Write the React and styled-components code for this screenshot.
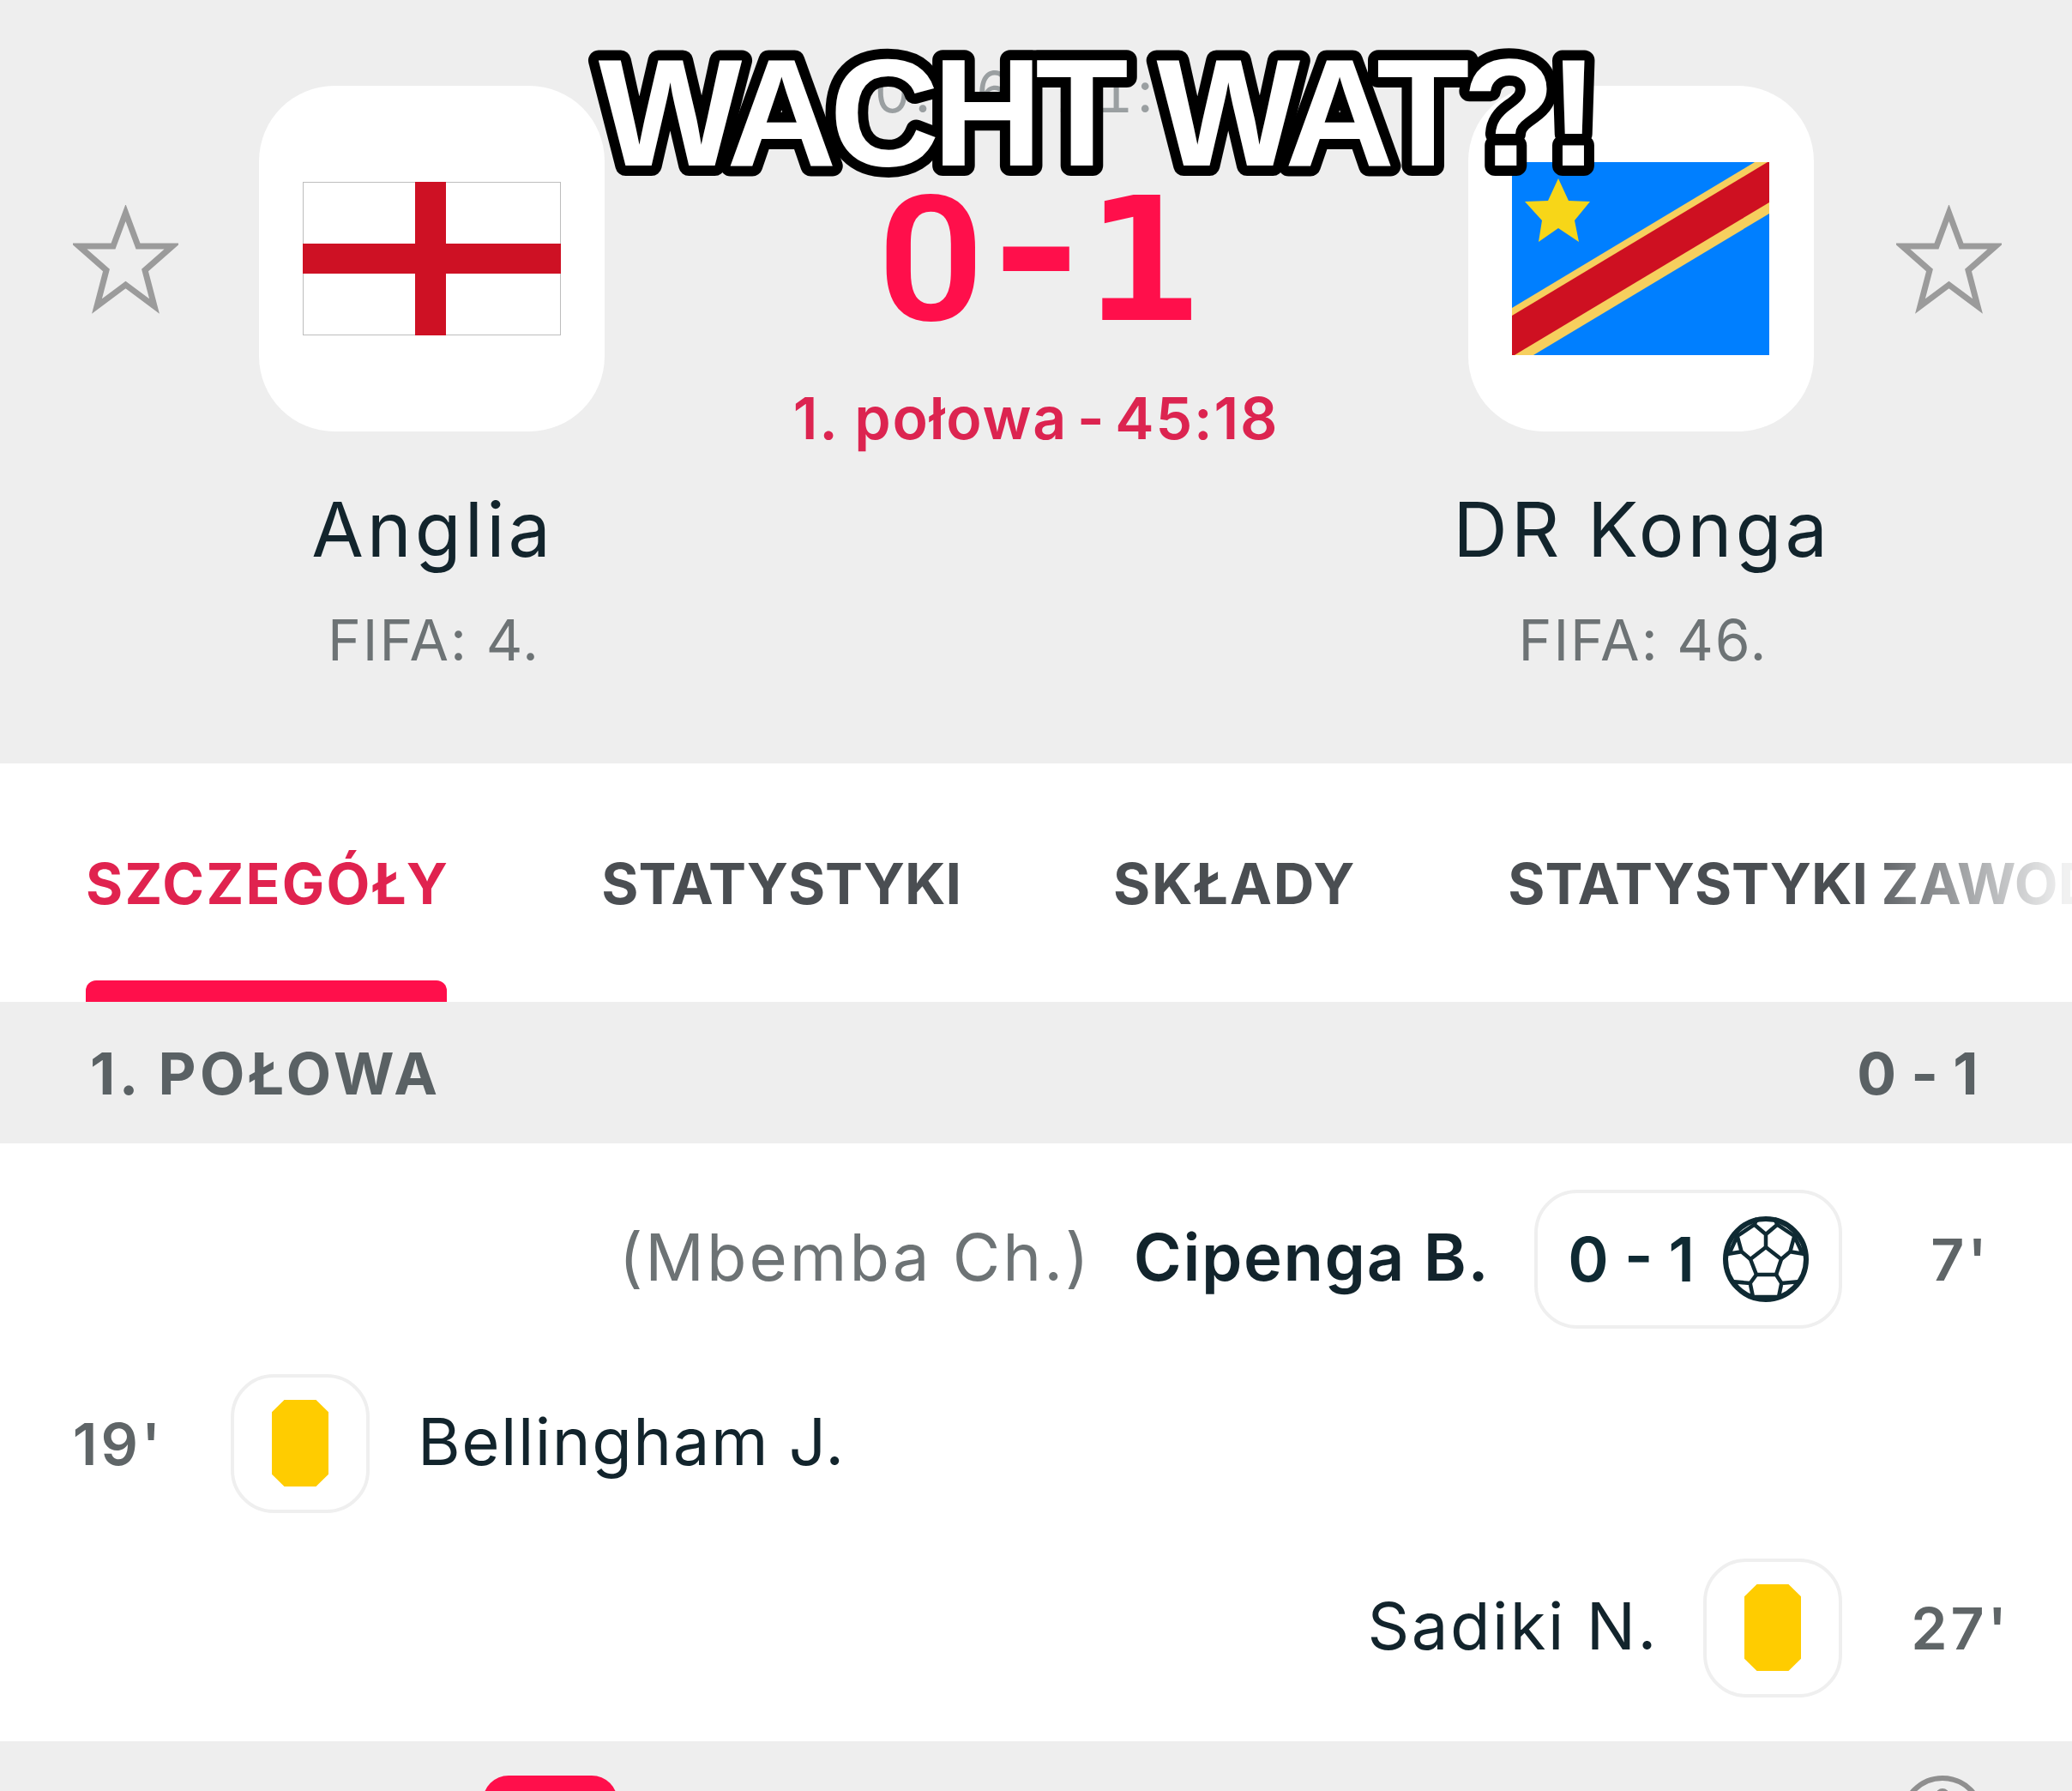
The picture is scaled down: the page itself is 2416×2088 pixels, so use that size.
import React from "react";
import styled, { createGlobalStyle } from "styled-components";

const GlobalStyle = createGlobalStyle`
  html, body { margin: 0; padding: 0; background: #fff; }
  body { font-family: Inter, "Liberation Sans", sans-serif; }
`;

const Page = styled.div`
  position: relative;
  width: 2416px;
  height: 2088px;
  overflow: hidden;
  background: #fff;
`;

const Caption = styled.svg`
  position: absolute;
  left: 660px;
  top: 30px;
  width: 1234px;
  height: 200px;
`;

const CaptionText = styled.text`
  font-family: "Liberation Sans", Arial, sans-serif;
  font-weight: 700;
  font-size: 177.5px;
  letter-spacing: -8.2px;
  fill: #fff;
  stroke: #000;
  stroke-width: 24px;
  stroke-linejoin: round;
  paint-order: stroke fill;
`;

const Header = styled.header`
  display: grid;
  grid-template-columns: 123px 500px 1fr 500px 123px;
  column-gap: 45px;
  box-sizing: border-box;
  height: 890px;
  padding: 0 85px;
  background: #eeeeee;
`;

const StarWrap = styled.div`
  padding-top: 239px;
  margin-left: ${(p) => (p.$right ? "3px" : "0")};
`;

const TeamCol = styled.div`
  display: flex;
  flex-direction: column;
  align-items: center;
  padding-top: 100px;
`;

const LogoBox = styled.div`
  display: flex;
  align-items: center;
  justify-content: center;
  width: 403px;
  height: 403px;
  border-radius: 88px;
  background: #fff;
`;

const TeamName = styled.div`
  margin-top: 66px;
  padding-left: 3px;
  font-size: 88px;
  line-height: 96px;
  letter-spacing: 4px;
  color: #12242c;
`;

const Rank = styled.div`
  margin-top: 41px;
  padding-left: 6px;
  font-size: 66px;
  line-height: 80px;
  letter-spacing: 2px;
  color: #6d7375;
`;

const CenterCol = styled.div`
  display: flex;
  flex-direction: column;
  align-items: center;
  padding-top: 69px;
`;

const DateLine = styled.div`
  font-size: 66px;
  line-height: 76px;
  letter-spacing: 5px;
  font-variant-numeric: tabular-nums;
  color: #9a9fa1;
`;

const Score = styled.div`
  display: flex;
  align-items: baseline;
  margin-top: 49px;
  height: 220px;
  font-family: "DejaVu Sans Mono", monospace;
  font-weight: 700;
  font-size: 200px;
  line-height: 220px;
  color: #ff0f4b;
`;

const ScoreZero = styled.span`
  display: inline-block;
  font-family: Roboto, sans-serif;
  font-weight: 600;
  font-size: 204px;
  margin-right: 8px;
  transform: translateX(4px) scaleX(1.07);
`;

const ScoreDash = styled.span`
  display: inline-block;
  margin-right: 4px;
  transform: translateY(-14px) scaleX(1.25);
`;

const ScoreOne = styled.span`
  display: inline-block;
  transform: scaleX(1.12);
`;

const Status = styled.div`
  margin-top: 33px;
  font-size: 68px;
  line-height: 80px;
  letter-spacing: 1.8px;
  font-weight: 600;
  color: #dc2450;
`;

const StatusDash = styled.span`
  margin: 0 -8px;
`;

const Tabs = styled.nav`
  display: flex;
  gap: 177px;
  box-sizing: border-box;
  height: 278px;
  padding-left: 100px;
  overflow: hidden;
  background: #fff;
`;

const Tab = styled.div`
  position: relative;
  flex: none;
  padding-top: 100px;
  font-size: 66px;
  line-height: 80px;
  font-weight: 700;
  letter-spacing: ${(p) => p.$ls}px;
  white-space: nowrap;
  color: ${(p) => (p.$active ? "#e0234f" : "#4a4e52")};
  ${(p) =>
    p.$fade &&
    `-webkit-mask-image: linear-gradient(to right, #000 400px, rgba(0,0,0,.08) 650px);`}
  ${(p) =>
    p.$active &&
    `&::after {
      content: "";
      position: absolute;
      left: 0;
      right: 3px;
      bottom: 0;
      height: 25px;
      border-radius: 12px 12px 0 0;
      background: #ff0f4b;
    }`}
`;

const SectionBar = styled.div`
  display: flex;
  align-items: center;
  justify-content: space-between;
  box-sizing: border-box;
  height: 165px;
  padding: 0 109px 0 105px;
  font-size: 68px;
  font-weight: 700;
  color: #5a6164;
  background: #eeeeee;
`;

const SectionTitle = styled.span`
  letter-spacing: 4.5px;
`;

const SectionScore = styled.span`
  letter-spacing: 0.5px;
`;

const Events = styled.section`
  box-sizing: border-box;
  height: 697px;
  padding: 27px 0 26px;
  background: #fff;
`;

const EventRow = styled.div`
  display: flex;
  align-items: center;
  justify-content: ${(p) => (p.$away ? "flex-end" : "flex-start")};
  height: 215px;
  padding: 0 ${(p) => (p.$away ? "45px" : "53px")};
`;

const Minute = styled.div`
  flex: none;
  width: 170px;
  text-align: center;
  font-size: 68px;
  font-weight: 600;
  letter-spacing: 4px;
  color: #5f6567;
`;

const IconBox = styled.div`
  flex: none;
  display: flex;
  align-items: center;
  justify-content: center;
  gap: 33px;
  box-sizing: border-box;
  height: 162px;
  min-width: 162px;
  padding: ${(p) => (p.$wide ? "0 35px" : "0")};
  margin: ${(p) => (p.$away ? "0 53px 0 52px" : "0 56px 0 46px")};
  border: 4px solid #efefef;
  border-radius: 50px;
  background: #fff;
`;

const Card = styled.div`
  width: 66px;
  height: 101px;
  background: #ffcc00;
  clip-path: polygon(22% 0, 78% 0, 100% 14%, 100% 86%, 78% 100%, 22% 100%, 0 86%, 0 14%);
`;

const PlayerName = styled.div`
  padding-bottom: 6px;
  font-size: 76px;
  letter-spacing: ${(p) => p.$ls}px;
  font-weight: ${(p) => (p.$bold ? 600 : 400)};
  white-space: nowrap;
  color: #12242c;
`;

const Assist = styled.div`
  margin-right: 49px;
  padding-bottom: 6px;
  font-size: 76px;
  letter-spacing: 3px;
  white-space: nowrap;
  color: #6d7375;
`;

const GoalScore = styled.div`
  font-size: 72px;
  font-weight: 600;
  white-space: nowrap;
  color: #0f2a33;
`;

const NextBar = styled.div`
  display: flex;
  justify-content: space-between;
  box-sizing: border-box;
  height: 58px;
  padding: 40px 102px 0 563px;
  overflow: hidden;
  background: #eeeeee;
`;

const RedPill = styled.div`
  width: 157px;
  height: 60px;
  border-radius: 30px 30px 0 0;
  background: #ff0f4b;
`;

const Ring = styled.div`
  position: relative;
  box-sizing: border-box;
  width: 98px;
  height: 98px;
  border: 6px solid #8f8f8f;
  border-radius: 50%;
  &::after {
    content: "";
    position: absolute;
    left: 35px;
    top: 9px;
    width: 16px;
    height: 16px;
    border-radius: 50%;
    background: #8f8f8f;
  }
`;

const Star = () => (
  <svg width="123" height="128" viewBox="0 0 123 128">
    <polygon
      points="61.5,9 76,48 116,48 84,76 95,118 61.5,93 28,118 39,76 7,48 47,48"
      fill="none"
      stroke="#9b9b9b"
      strokeWidth="7"
      strokeLinejoin="miter"
    />
  </svg>
);

const EnglandFlag = () => (
  <svg width="301" height="179" viewBox="0 0 301 179">
    <rect x="0.5" y="0.5" width="300" height="178" fill="#fff" stroke="#bdbdbd" />
    <rect x="131" y="0" width="36" height="179" fill="#ce1124" />
    <rect x="0" y="72" width="301" height="35" fill="#ce1124" />
  </svg>
);

const CongoFlag = () => (
  <svg width="300" height="225" viewBox="0 0 300 225">
    <rect width="300" height="225" fill="#007fff" />
    <polygon points="283,0 300,0 300,60 25,225 0,225 0,170" fill="#f6cf5e" />
    <polygon points="298,0 300,0 300,47 3,225 0,225 0,179" fill="#ce1021" />
    <polygon points="54,19 66,45 91,46 73,68 78,93 54,77 31,93 35,68 15,46 42,45" fill="#f7d618" />
  </svg>
);

const Ball = () => (
  <svg width="100" height="100" viewBox="0 0 100 100" fill="none" stroke="#0f2a33" strokeWidth="4.5" strokeLinejoin="round">
    <circle cx="50" cy="50" r="47" strokeWidth="6" />
    <polygon points="50,36 68,50 62,68 39,68 32,50" />
    <path d="M50 36V21L36.7 9.7L40 2M50 21L63.3 9.7L60 2M36.7 9.7L16.7 23L21.7 41.3L32 50M63.3 9.7L83.3 23L78.3 41.3L68 50M16.7 23L8 42M21.7 41.3L5 44M83.3 23L92 42M78.3 41.3L95 44M39 68L31.7 78L10 76M31.7 78L35 94M62 68L68.3 78L90 76M68.3 78L65 94M35 94H65" />
  </svg>
);

const App = () => {
  return (
    <Page>
      <GlobalStyle />
      <Header>
        <StarWrap>
          <Star />
        </StarWrap>
        <TeamCol>
          <LogoBox>
            <EnglandFlag />
          </LogoBox>
          <TeamName>Anglia</TeamName>
          <Rank>FIFA: 4.</Rank>
        </TeamCol>
        <CenterCol>
          <DateLine>10.06. 21:15</DateLine>
          <Score>
            <ScoreZero>0</ScoreZero>
            <ScoreDash>-</ScoreDash>
            <ScoreOne>1</ScoreOne>
          </Score>
          <Status>
            1. połowa <StatusDash>-</StatusDash> 45:18
          </Status>
        </CenterCol>
        <TeamCol>
          <LogoBox>
            <CongoFlag />
          </LogoBox>
          <TeamName>DR Konga</TeamName>
          <Rank>FIFA: 46.</Rank>
        </TeamCol>
        <StarWrap $right>
          <Star />
        </StarWrap>
      </Header>

      <Tabs>
        <Tab $active $ls={2.25}>SZCZEGÓŁY</Tab>
        <Tab $ls={0}>STATYSTYKI</Tab>
        <Tab $ls={1.7}>SKŁADY</Tab>
        <Tab $fade $ls={0}>STATYSTYKI ZAWODNIKÓW</Tab>
      </Tabs>

      <SectionBar>
        <SectionTitle>1. POŁOWA</SectionTitle>
        <SectionScore>0 - 1</SectionScore>
      </SectionBar>

      <Events>
        <EventRow $away>
          <Assist>(Mbemba Ch.)</Assist>
          <PlayerName $bold $ls={1.6}>Cipenga B.</PlayerName>
          <IconBox $wide $away>
            <GoalScore>0 - 1</GoalScore>
            <Ball />
          </IconBox>
          <Minute>7'</Minute>
        </EventRow>
        <EventRow>
          <Minute>19'</Minute>
          <IconBox>
            <Card />
          </IconBox>
          <PlayerName $ls={1.5}>Bellingham J.</PlayerName>
        </EventRow>
        <EventRow $away>
          <PlayerName $ls={2.5}>Sadiki N.</PlayerName>
          <IconBox $away>
            <Card />
          </IconBox>
          <Minute>27'</Minute>
        </EventRow>
      </Events>

      <NextBar>
        <RedPill />
        <Ring />
      </NextBar>

      <Caption viewBox="0 0 1234 200">
        <CaptionText x="617" y="163" textAnchor="middle">WACHT WAT?!</CaptionText>
      </Caption>
    </Page>
  );
};

export default App;
